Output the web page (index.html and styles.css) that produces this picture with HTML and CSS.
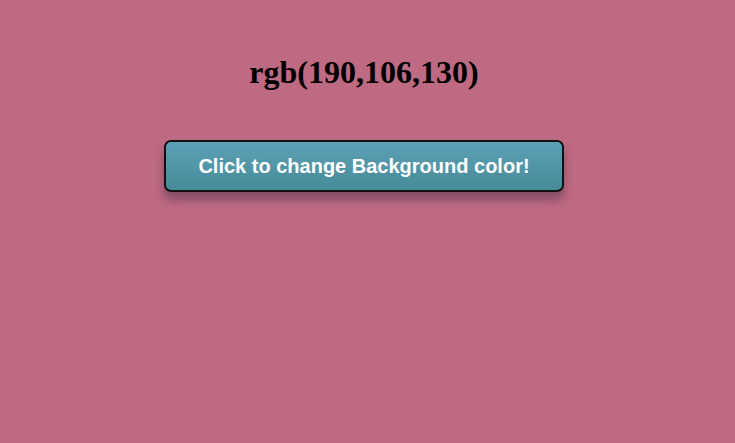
FILE: index.html
```html
<!DOCTYPE html>
<html>
<head>
<meta charset="utf-8">
<link rel="stylesheet" href="styles.css">
</head>
<body>
<div class="page">
  <h1 class="title">rgb(190,106,130)</h1>
  <button class="change-btn">Click to change Background color!</button>
</div>
</body>
</html>
```
FILE: styles.css
```css
html, body {
  margin: 0;
  padding: 0;
}
body {
  background: rgb(190,106,130);
  font-family: "Liberation Serif", "Times New Roman", serif;
  height: 443px;
}
.page {
  display: flex;
  flex-direction: column;
  align-items: center;
  padding: 0 7px 0 0;
}
.title {
  font-size: 32px;
  font-weight: bold;
  margin: 54px 0 0 0;
  color: #000;
}
.change-btn {
  margin-top: 49px;
  width: 400px;
  height: 52px;
  border: 2px solid #111;
  border-radius: 7px;
  background: linear-gradient(to bottom, #5da0b6, #468b98);
  color: #fff;
  font-family: "Liberation Sans", Arial, sans-serif;
  font-weight: bold;
  font-size: 20px;
  box-shadow: 0 8px 10px rgba(60,40,70,0.45);
  padding: 0;
}
```
